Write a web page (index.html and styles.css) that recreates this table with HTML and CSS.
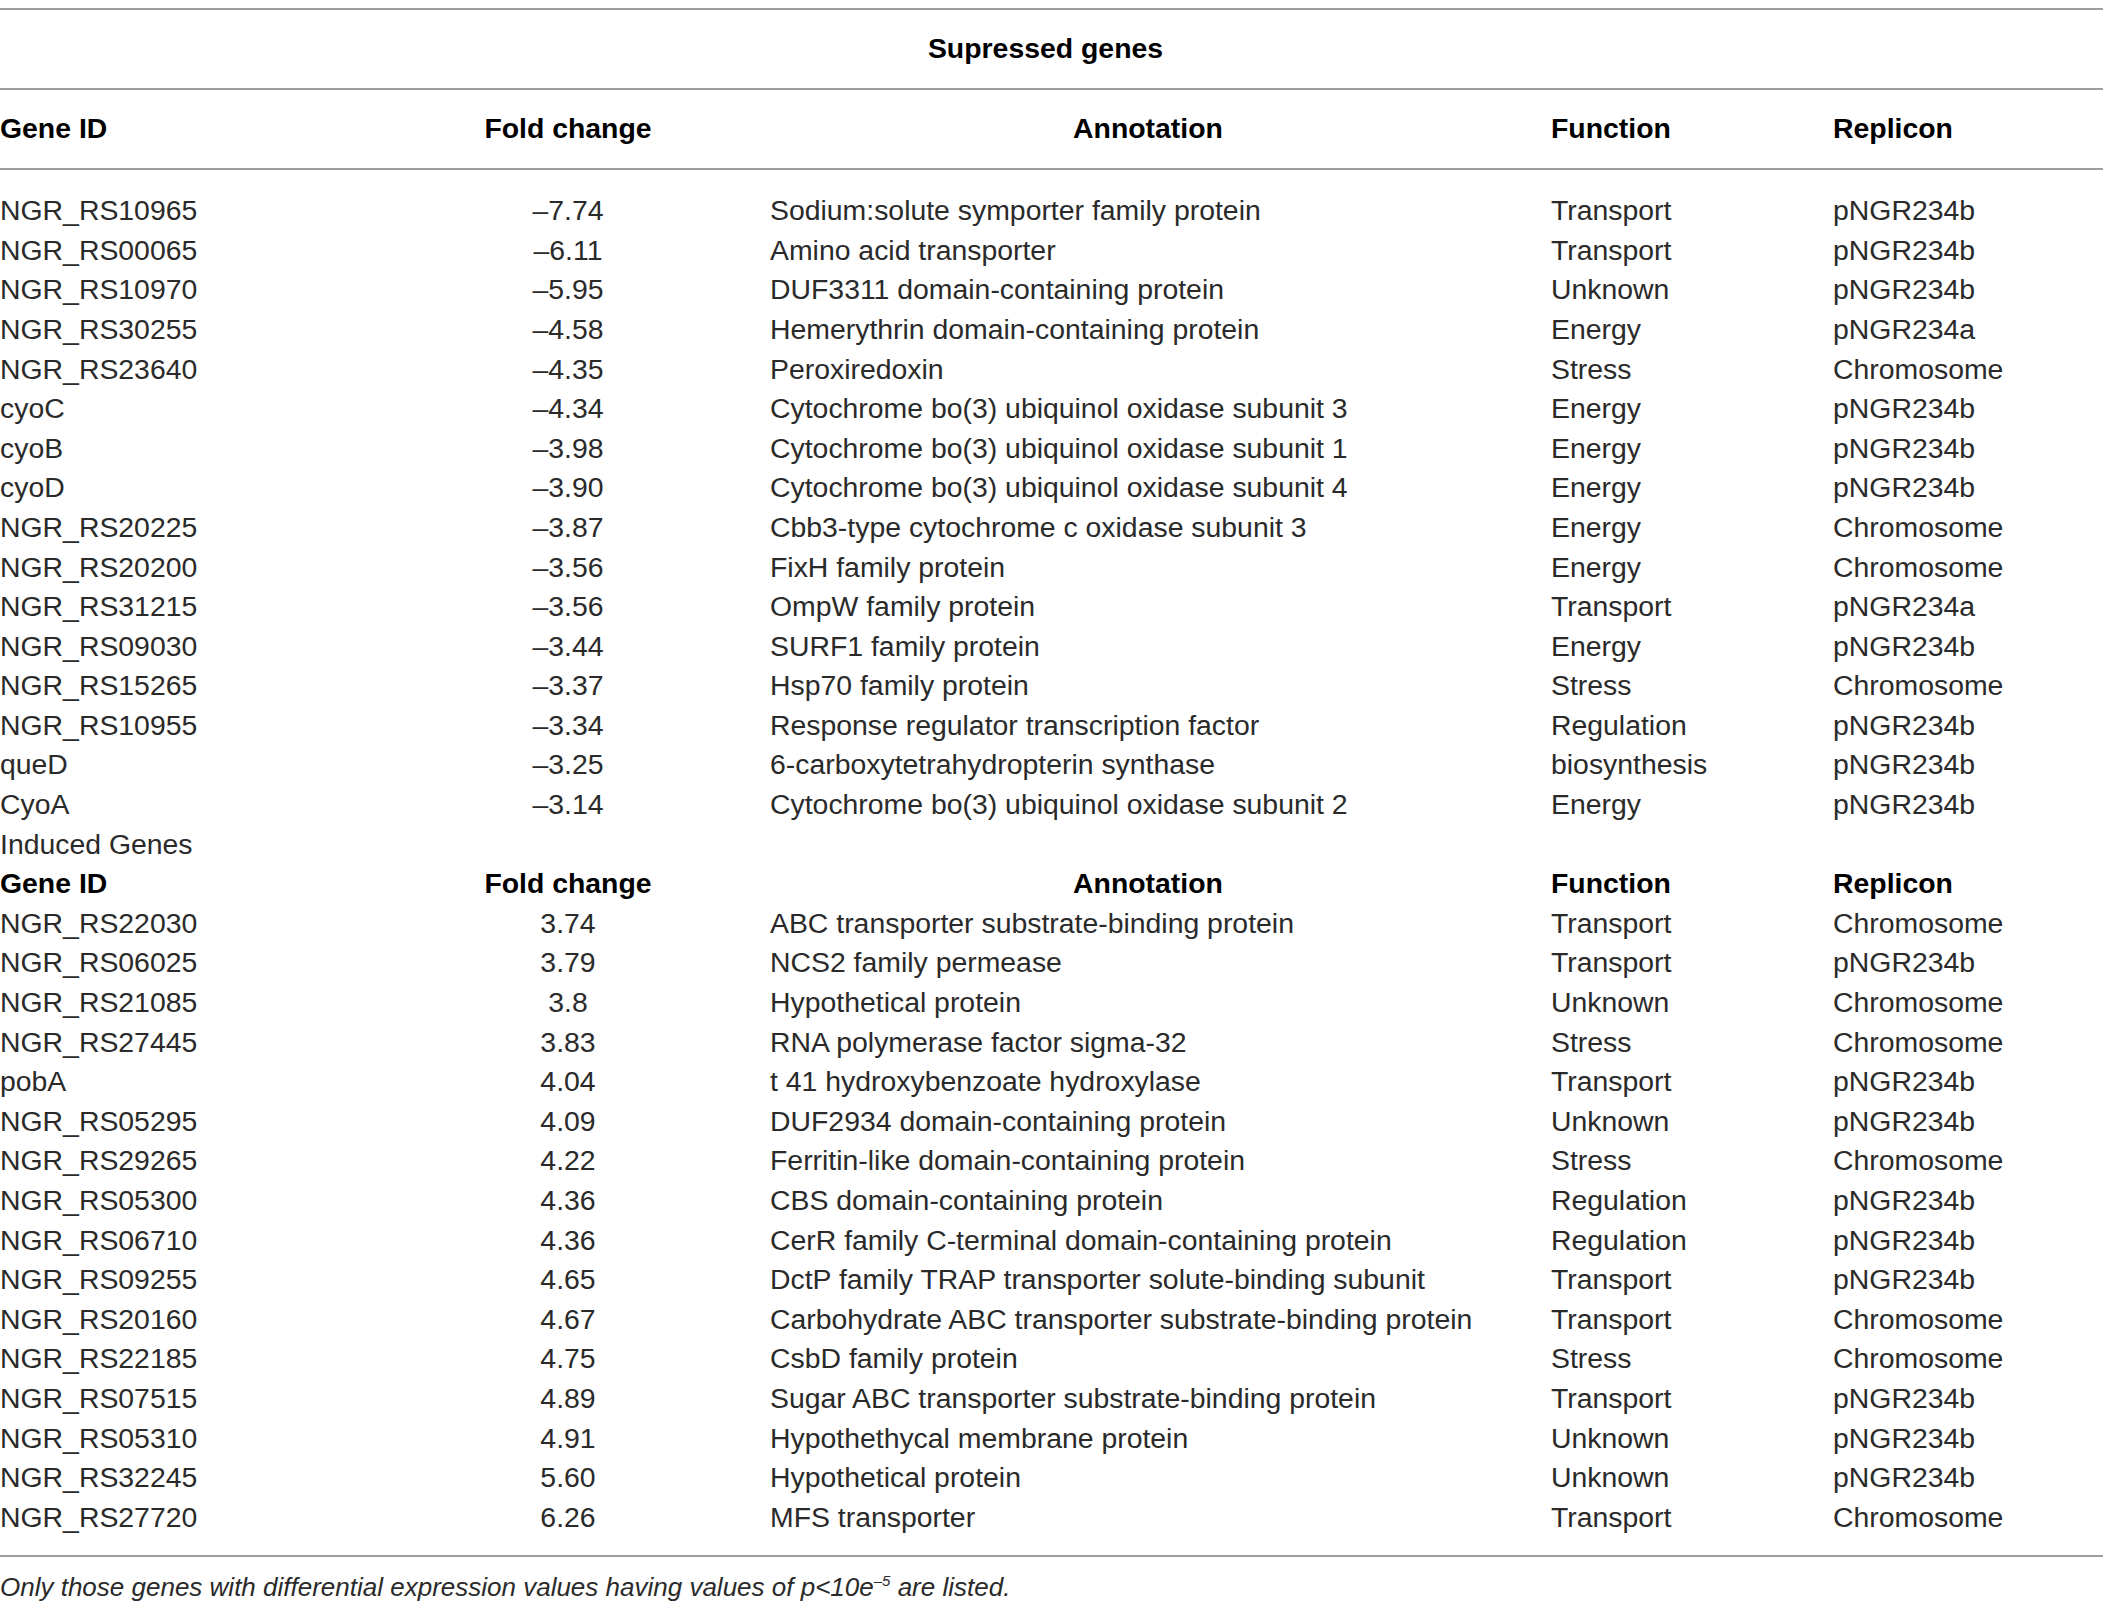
FILE: index.html
```html
<!DOCTYPE html>
<html>
<head>
<meta charset="utf-8">
<link rel="stylesheet" href="styles.css">
</head>
<body>
<table class="genes">
<colgroup>
<col class="c-id"><col class="c-fold"><col class="c-ann"><col class="c-fn"><col class="c-rep">
</colgroup>
<thead>
<tr class="title"><th colspan="5">Supressed genes</th></tr>
<tr class="head"><th class="l">Gene ID</th><th class="c">Fold change</th><th class="c">Annotation</th><th class="l pad">Function</th><th class="l pad">Replicon</th></tr>
</thead>
<tbody>
<tr class="first"><td>NGR_RS10965</td><td class="c">–7.74</td><td class="pad">Sodium:solute symporter family protein</td><td class="pad">Transport</td><td class="pad">pNGR234b</td></tr>
<tr><td>NGR_RS00065</td><td class="c">–6.11</td><td class="pad">Amino acid transporter</td><td class="pad">Transport</td><td class="pad">pNGR234b</td></tr>
<tr><td>NGR_RS10970</td><td class="c">–5.95</td><td class="pad">DUF3311 domain-containing protein</td><td class="pad">Unknown</td><td class="pad">pNGR234b</td></tr>
<tr><td>NGR_RS30255</td><td class="c">–4.58</td><td class="pad">Hemerythrin domain-containing protein</td><td class="pad">Energy</td><td class="pad">pNGR234a</td></tr>
<tr><td>NGR_RS23640</td><td class="c">–4.35</td><td class="pad">Peroxiredoxin</td><td class="pad">Stress</td><td class="pad">Chromosome</td></tr>
<tr><td>cyoC</td><td class="c">–4.34</td><td class="pad">Cytochrome bo(3) ubiquinol oxidase subunit 3</td><td class="pad">Energy</td><td class="pad">pNGR234b</td></tr>
<tr><td>cyoB</td><td class="c">–3.98</td><td class="pad">Cytochrome bo(3) ubiquinol oxidase subunit 1</td><td class="pad">Energy</td><td class="pad">pNGR234b</td></tr>
<tr><td>cyoD</td><td class="c">–3.90</td><td class="pad">Cytochrome bo(3) ubiquinol oxidase subunit 4</td><td class="pad">Energy</td><td class="pad">pNGR234b</td></tr>
<tr><td>NGR_RS20225</td><td class="c">–3.87</td><td class="pad">Cbb3-type cytochrome c oxidase subunit 3</td><td class="pad">Energy</td><td class="pad">Chromosome</td></tr>
<tr><td>NGR_RS20200</td><td class="c">–3.56</td><td class="pad">FixH family protein</td><td class="pad">Energy</td><td class="pad">Chromosome</td></tr>
<tr><td>NGR_RS31215</td><td class="c">–3.56</td><td class="pad">OmpW family protein</td><td class="pad">Transport</td><td class="pad">pNGR234a</td></tr>
<tr><td>NGR_RS09030</td><td class="c">–3.44</td><td class="pad">SURF1 family protein</td><td class="pad">Energy</td><td class="pad">pNGR234b</td></tr>
<tr><td>NGR_RS15265</td><td class="c">–3.37</td><td class="pad">Hsp70 family protein</td><td class="pad">Stress</td><td class="pad">Chromosome</td></tr>
<tr><td>NGR_RS10955</td><td class="c">–3.34</td><td class="pad">Response regulator transcription factor</td><td class="pad">Regulation</td><td class="pad">pNGR234b</td></tr>
<tr><td>queD</td><td class="c">–3.25</td><td class="pad">6-carboxytetrahydropterin synthase</td><td class="pad">biosynthesis</td><td class="pad">pNGR234b</td></tr>
<tr><td>CyoA</td><td class="c">–3.14</td><td class="pad">Cytochrome bo(3) ubiquinol oxidase subunit 2</td><td class="pad">Energy</td><td class="pad">pNGR234b</td></tr>
<tr><td colspan="5">Induced Genes</td></tr>
<tr class="subhead"><th class="l">Gene ID</th><th class="c">Fold change</th><th class="c">Annotation</th><th class="l pad">Function</th><th class="l pad">Replicon</th></tr>
<tr><td>NGR_RS22030</td><td class="c">3.74</td><td class="pad">ABC transporter substrate-binding protein</td><td class="pad">Transport</td><td class="pad">Chromosome</td></tr>
<tr><td>NGR_RS06025</td><td class="c">3.79</td><td class="pad">NCS2 family permease</td><td class="pad">Transport</td><td class="pad">pNGR234b</td></tr>
<tr><td>NGR_RS21085</td><td class="c">3.8</td><td class="pad">Hypothetical protein</td><td class="pad">Unknown</td><td class="pad">Chromosome</td></tr>
<tr><td>NGR_RS27445</td><td class="c">3.83</td><td class="pad">RNA polymerase factor sigma-32</td><td class="pad">Stress</td><td class="pad">Chromosome</td></tr>
<tr><td>pobA</td><td class="c">4.04</td><td class="pad">t 41 hydroxybenzoate hydroxylase</td><td class="pad">Transport</td><td class="pad">pNGR234b</td></tr>
<tr><td>NGR_RS05295</td><td class="c">4.09</td><td class="pad">DUF2934 domain-containing protein</td><td class="pad">Unknown</td><td class="pad">pNGR234b</td></tr>
<tr><td>NGR_RS29265</td><td class="c">4.22</td><td class="pad">Ferritin-like domain-containing protein</td><td class="pad">Stress</td><td class="pad">Chromosome</td></tr>
<tr><td>NGR_RS05300</td><td class="c">4.36</td><td class="pad">CBS domain-containing protein</td><td class="pad">Regulation</td><td class="pad">pNGR234b</td></tr>
<tr><td>NGR_RS06710</td><td class="c">4.36</td><td class="pad">CerR family C-terminal domain-containing protein</td><td class="pad">Regulation</td><td class="pad">pNGR234b</td></tr>
<tr><td>NGR_RS09255</td><td class="c">4.65</td><td class="pad">DctP family TRAP transporter solute-binding subunit</td><td class="pad">Transport</td><td class="pad">pNGR234b</td></tr>
<tr><td>NGR_RS20160</td><td class="c">4.67</td><td class="pad">Carbohydrate ABC transporter substrate-binding protein</td><td class="pad">Transport</td><td class="pad">Chromosome</td></tr>
<tr><td>NGR_RS22185</td><td class="c">4.75</td><td class="pad">CsbD family protein</td><td class="pad">Stress</td><td class="pad">Chromosome</td></tr>
<tr><td>NGR_RS07515</td><td class="c">4.89</td><td class="pad">Sugar ABC transporter substrate-binding protein</td><td class="pad">Transport</td><td class="pad">pNGR234b</td></tr>
<tr><td>NGR_RS05310</td><td class="c">4.91</td><td class="pad">Hypothethycal membrane protein</td><td class="pad">Unknown</td><td class="pad">pNGR234b</td></tr>
<tr><td>NGR_RS32245</td><td class="c">5.60</td><td class="pad">Hypothetical protein</td><td class="pad">Unknown</td><td class="pad">pNGR234b</td></tr>
<tr class="last"><td>NGR_RS27720</td><td class="c">6.26</td><td class="pad">MFS transporter</td><td class="pad">Transport</td><td class="pad">Chromosome</td></tr>
</tbody>
</table>
<p class="note">Only those genes with differential expression values having values of p&lt;10e<sup>–5</sup> are listed.</p>
</body>
</html>
```
FILE: styles.css
```css
html, body {
  margin: 0;
  padding: 0;
  background: #fff;
}
body {
  font-family: "Liberation Sans", Arial, sans-serif;
  font-weight: 400;
  color: #2a2a2a;
  font-size: 28.4px;
}
.genes {
  margin-top: 8px;
  width: 2103px;
  table-layout: fixed;
  border-collapse: collapse;
  border-top: 2px solid #9e9e9e;
  border-bottom: 2px solid #9e9e9e;
}
.c-id { width: 380px; }
.c-fold { width: 376px; }
.c-ann { width: 784px; }
.c-fn { width: 282px; }
.c-rep { width: 281px; }
.genes th, .genes td {
  padding: 0;
  white-space: nowrap;
  text-align: left;
  vertical-align: middle;
  line-height: 1.1;
}
.genes th {
  font-weight: 700;
  color: #000;
}
.genes td { height: 39.6px; }
.title th {
  height: 78px;
  text-align: center;
  padding-right: 12px;
  border-bottom: 2px solid #9e9e9e;
}
.head th {
  height: 78px;
  border-bottom: 2px solid #9e9e9e;
}
.subhead th { height: 39.6px; }
.genes .c { text-align: center; }
.genes .pad { padding-left: 14px; }
.genes th.pad { padding-left: 11px; }
.genes td.pad:nth-child(4), .genes td.pad:nth-child(5) { padding-left: 11px; }
.first td { padding-top: 21px; }
.last td { padding-bottom: 18px; }
.note {
  margin: 15px 0 0 0;
  font-style: italic;
  font-size: 26px;
}
.note sup {
  font-size: 15px;
  line-height: 0;
}
```
